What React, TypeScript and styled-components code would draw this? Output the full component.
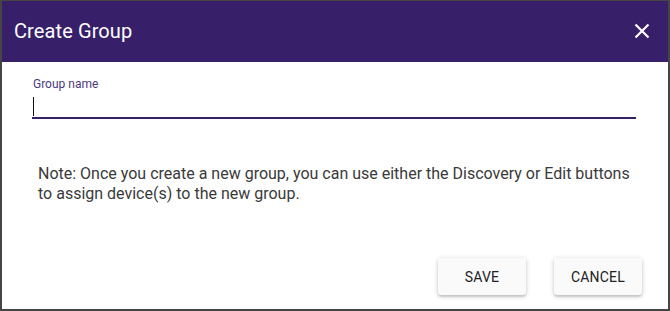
import React from "react";
import styled, { createGlobalStyle } from "styled-components";

const Global = createGlobalStyle`
  html, body { margin: 0; padding: 0; background: #fff; }
  body { font-family: Roboto, "Noto Sans", Arial, sans-serif; }
  * { box-sizing: border-box; }
`;

const Dialog = styled.div`
  width: 670px;
  height: 311px;
  border: 2px solid #454545;
  border-top-width: 1px;
  background: #fff;
  display: flex;
  flex-direction: column;
`;

const Header = styled.div`
  height: 61px;
  background: #381f69;
  display: flex;
  align-items: center;
  justify-content: space-between;
  padding: 0 16px 2px 12px;
`;

const Title = styled.h2`
  margin: 0;
  font-size: 20px;
  font-weight: 400;
  color: #fff;
  letter-spacing: 0.1px;
`;

const CloseButton = styled.button`
  border: 0;
  background: transparent;
  padding: 0;
  width: 20px;
  height: 20px;
  display: flex;
  align-items: center;
  justify-content: center;
  cursor: pointer;
`;

const Body = styled.div`
  flex: 1;
  display: flex;
  flex-direction: column;
  padding: 15px 32px 0 30px;
`;

const Field = styled.label`
  display: flex;
  flex-direction: column;
`;

const Label = styled.span`
  font-size: 12px;
  color: #4b3a80;
  line-height: 15px;
  margin-left: 1px;
`;

const InputBox = styled.div`
  margin-top: 3px;
  height: 24px;
  border-bottom: 2px solid #381f69;
  display: flex;
  align-items: center;
  padding-left: 1px;
`;

const Caret = styled.span`
  width: 1px;
  height: 19px;
  background: #111;
`;

const Note = styled.p`
  margin: 45px 0 0 6px;
  font-size: 16px;
  line-height: 20px;
  color: #3a3a3a;
`;

const Actions = styled.div`
  display: flex;
  justify-content: flex-end;
  gap: 28px;
  padding: 0 26px 14px 0;
`;

const Button = styled.button`
  width: 88px;
  height: 37px;
  border: 0;
  border-radius: 3px;
  background: #fafafa;
  box-shadow: 0 1px 5px rgba(0, 0, 0, 0.2), 0 2px 2px rgba(0, 0, 0, 0.12);
  font-family: Roboto, Arial, sans-serif;
  font-size: 14px;
  font-weight: 400;
  color: #222;
  text-transform: uppercase;
  letter-spacing: 0.2px;
  cursor: pointer;
`;

export default function App() {
  return (
    <>
      <Global />
      <Dialog>
        <Header>
          <Title>Create Group</Title>
          <CloseButton aria-label="close">
            <svg width="16" height="16" viewBox="0 0 16 16">
              <path d="M1.5 1.5 L14.5 14.5 M14.5 1.5 L1.5 14.5" stroke="#fff" strokeWidth="2.2" strokeLinecap="butt" />
            </svg>
          </CloseButton>
        </Header>
        <Body>
          <Field>
            <Label>Group name</Label>
            <InputBox>
              <Caret />
            </InputBox>
          </Field>
          <Note>
            Note: Once you create a new group, you can use either the Discovery or Edit buttons
            to assign device(s) to the new group.
          </Note>
        </Body>
        <Actions>
          <Button>Save</Button>
          <Button>Cancel</Button>
        </Actions>
      </Dialog>
    </>
  );
}
